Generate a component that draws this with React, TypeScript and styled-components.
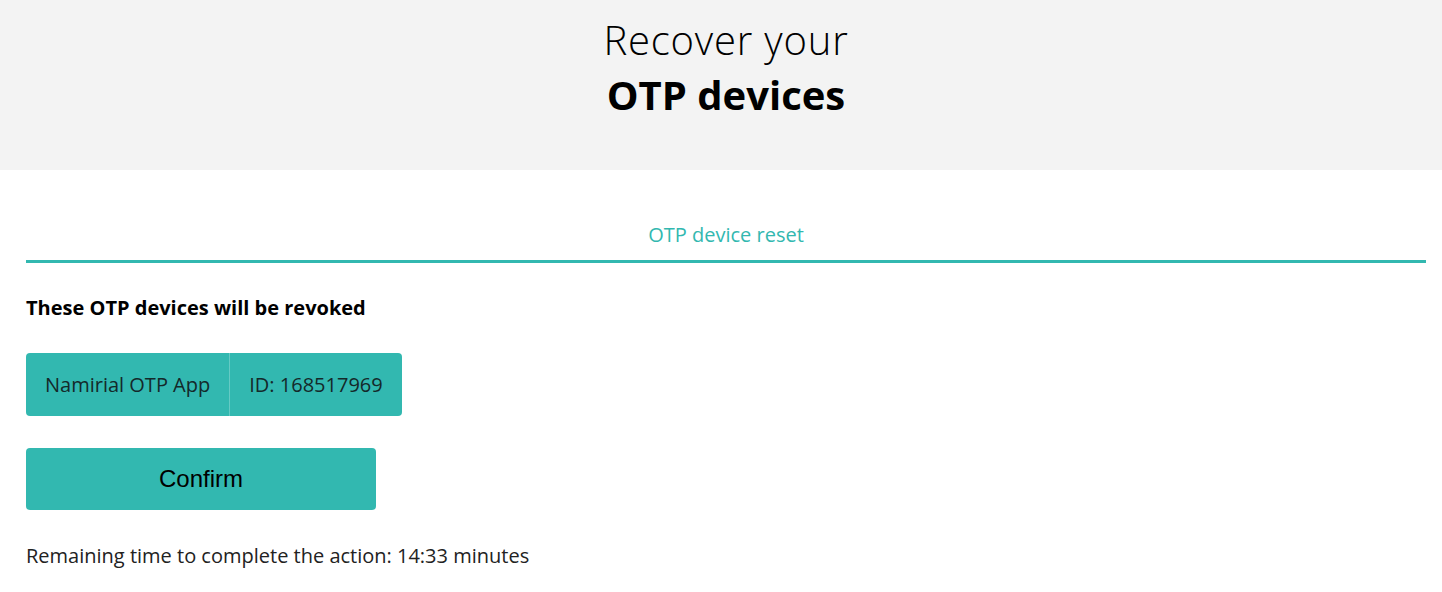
import styled, { createGlobalStyle } from 'styled-components';

const GlobalStyle = createGlobalStyle`
    html, body { margin: 0; padding: 0; background: #fff; }
    body { font-family: 'Open Sans', 'Noto Sans', sans-serif; color: #000; }
`;

const teal = '#32b8b0';

const Hero = styled.header`
    height: 170px;
    background: #f3f3f3;
    display: flex;
    flex-direction: column;
    align-items: center;
    padding: 12px 0 0 10px;
    box-sizing: border-box;
`;

const HeroLine = styled.h1<{ $bold?: boolean }>`
    margin: 0;
    font-size: 40px;
    line-height: 55px;
    font-weight: ${(p) => (p.$bold ? 700 : 300)};
    letter-spacing: ${(p) => (p.$bold ? '0' : '0.8px')};
    color: #000;
`;

const Main = styled.main`
    padding: 51px 16px 0 26px;
`;

const Tabs = styled.nav`
    display: flex;
    justify-content: center;
    border-bottom: 3px solid ${teal};
    padding-bottom: 12px;
`;

const Tab = styled.span`
    font-size: 20px;
    line-height: 27px;
    color: ${teal};
`;

const Notice = styled.p`
    margin: 31px 0 0;
    font-size: 20px;
    font-weight: 700;
    line-height: 27px;
`;

const Device = styled.div`
    margin-top: 32px;
    display: inline-flex;
    height: 63px;
    background: ${teal};
    border-radius: 4px;
    overflow: hidden;
`;

const DeviceCell = styled.span`
    display: flex;
    align-items: center;
    padding: 0 19px;
    font-size: 20px;
    color: #14292a;
    & + & { border-left: 1px solid rgba(255, 255, 255, 0.25); }
`;

const Confirm = styled.button`
    display: block;
    margin-top: 32px;
    width: 350px;
    height: 62px;
    border: 0;
    border-radius: 4px;
    background: ${teal};
    font-family: 'Liberation Sans', Arial, sans-serif;
    font-size: 24px;
    color: #000;
    cursor: pointer;
`;

const Timer = styled.p`
    margin: 32px 0 0;
    font-size: 20px;
    line-height: 27px;
    color: #222;
`;

function App() {
    return (
        <>
            <GlobalStyle />
            <Hero>
                <HeroLine>Recover your</HeroLine>
                <HeroLine $bold>OTP devices</HeroLine>
            </Hero>
            <Main>
                <Tabs>
                    <Tab>OTP device reset</Tab>
                </Tabs>
                <Notice>These OTP devices will be revoked</Notice>
                <Device>
                    <DeviceCell>Namirial OTP App</DeviceCell>
                    <DeviceCell>ID: 168517969</DeviceCell>
                </Device>
                <Confirm>Confirm</Confirm>
                <Timer>Remaining time to complete the action: 14:33 minutes</Timer>
            </Main>
        </>
    );
}

export default App;
